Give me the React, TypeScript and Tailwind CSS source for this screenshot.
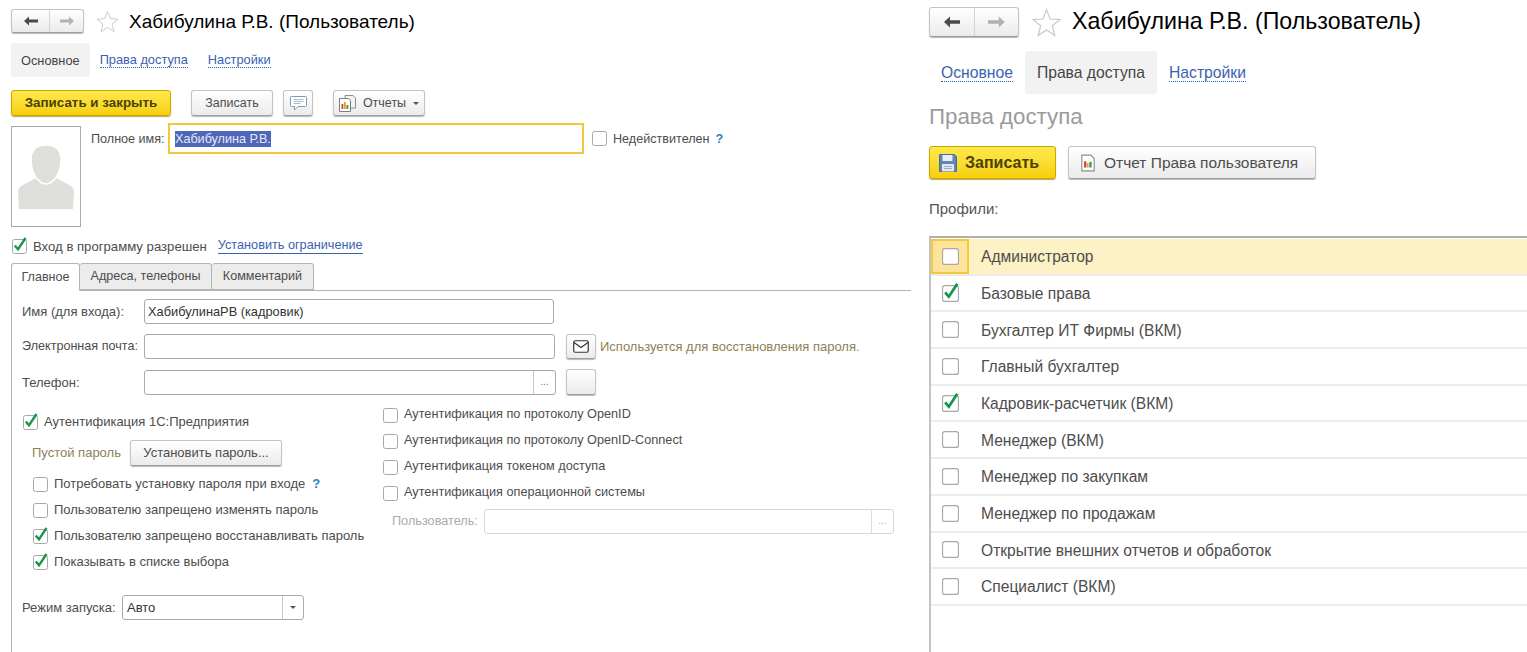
import type { ReactNode } from 'react'

const btnGrad = 'bg-gradient-to-b from-white to-[#ebebeb]'
const plainBtn = `${btnGrad} flex items-center justify-center rounded-[3px] border border-[#c4c4c4] border-b-[#9d9d9d] shadow-[0_1px_1px_#b8b8b8]`
const yellowBtn = 'flex items-center rounded-[3px] border border-[#c9a800] bg-gradient-to-b from-[#ffe94a] to-[#f7cf00] shadow-[0_1px_1px_#b8a860] font-bold text-[#4a4208]'

function Check({ checked, size = 15 }: { checked?: boolean; size?: number }) {
  return (
    <svg width={size} height={size} viewBox="0 0 15 15" className="shrink-0 overflow-visible">
      <rect x="0.5" y="0.5" width="14" height="14" rx="2" fill="#fff" stroke="#a8a8a8" />
      {checked && <path d="M2.8 6.5l3.2 3.8L13.5-1" fill="none" stroke="#14964b" strokeWidth="2.4" />}
    </svg>
  )
}

function NavButtons({ w, h, scale }: { w: number; h: number; scale: number }) {
  const half = 34 * scale
  return (
    <div className={`${plainBtn} shrink-0`} style={{ width: w, height: h }}>
      <div className="flex h-full items-center justify-center border-r border-[#d4d4d4]" style={{ width: half + 4 }}>
        <svg width={14 * scale} height={10 * scale} viewBox="0 0 14 10">
          <path d="M0 5l5-4.500V3.500h9v3H5v3z" fill="#4a4a4a" />
        </svg>
      </div>
      <div className="flex h-full flex-1 items-center justify-center">
        <svg width={14 * scale} height={10 * scale} viewBox="0 0 14 10">
          <path d="M14 5L9 .5V3.500H0v3h9v3z" fill="#b2b2b2" />
        </svg>
      </div>
    </div>
  )
}

function Star({ size }: { size: number }) {
  return (
    <svg width={size} height={size} viewBox="0 0 24 24" className="shrink-0">
      <path d="M12 1.500l3 7.600 8 .5-6.200 5.100 2 7.900L12 18.200l-6.800 4.400 2-7.900L1 9.600l8-.5z" fill="#fff" stroke="#c9c9c9" strokeWidth="1" />
    </svg>
  )
}

function ReportIcon({ size = 16 }: { size?: number }) {
  return (
    <svg width={size} height={size} viewBox="0 0 16 16" className="shrink-0">
      <path d="M2.500 1h8l3 3v11h-11z" fill="#fff" stroke="#8d8d8d" />
      <rect x="4.500" y="6.500" width="2" height="5.500" fill="#c8452f" />
      <rect x="7" y="8" width="1.500" height="4" fill="#e0a020" />
      <rect x="9.200" y="7" width="2" height="5" fill="#2f9a48" />
    </svg>
  )
}

function DocsIcon() {
  return (
    <svg width="17" height="17" viewBox="0 0 17 17" className="shrink-0">
      <path d="M6 .5h8l2.500 2.500v10H6z" fill="#f4f4f4" stroke="#8d8d8d" />
      <path d="M.5 3.500h9l2 2v11h-11z" fill="#fff" stroke="#7d7d7d" />
      <rect x="2.500" y="9" width="1.800" height="5" fill="#c8452f" />
      <rect x="5" y="7" width="1.800" height="7" fill="#e0a020" />
      <rect x="7.500" y="10" width="1.800" height="4" fill="#2f9a48" />
    </svg>
  )
}

function ChatIcon() {
  return (
    <svg width="17" height="15" viewBox="0 0 17 15">
      <path d="M1.500.5h14a1 1 0 0 1 1 1v8a1 1 0 0 1-1 1H8l-3.500 3.500V10.500h-3a1 1 0 0 1-1-1v-8a1 1 0 0 1 1-1z" fill="#fff" stroke="#7f9bb0" />
      <path d="M3.500 3.500h10M3.500 5.500h10M3.500 7.500h7" stroke="#a9bccb" />
    </svg>
  )
}

function SaveIcon() {
  return (
    <svg width="18" height="18" viewBox="0 0 18 18" className="shrink-0">
      <path d="M.5.5h15l2 2v15H.5z" fill="#5f86b5" stroke="#4a6c96" />
      <rect x="3.500" y="1" width="10" height="6" fill="#e8eef4" />
      <rect x="3" y="10" width="12" height="7.500" fill="#dfe6ee" />
      <path d="M5 12.500h8M5 14.500h8" stroke="#9fb0c2" />
    </svg>
  )
}

function Person() {
  return (
    <svg width="56" height="65" viewBox="0 0 56 65">
      <path d="M1 64L0 47q0-4 4-6.500L18 33q10 9 20 0l14 7.500q4 2.500 4 6.500l-1 17z" fill="#dededa" />
      <path d="M28 0c10 0 15 6 15 15 0 12-7 24-15 24S13 27 13 15C13 6 18 0 28 0z" fill="#dededa" stroke="#fff" strokeWidth="1.500" />
    </svg>
  )
}

function TabLink({ children, active, big }: { children: ReactNode; active?: boolean; big?: boolean }) {
  if (active) {
    return (
      <div className={big ? 'flex h-[43px] items-center rounded-[3px] bg-[#f2f2f2] px-[12px] pt-[1px] text-[#444]' : 'flex h-[34px] items-center rounded-[2px] bg-[#f2f2f2] px-[10px] pt-[1px] text-[#444]'}>
        {children}
      </div>
    )
  }
  return (
    <div className={big ? 'flex h-[43px] items-center px-[12px] pt-[1px]' : 'flex h-[34px] items-center px-[10px] pt-[1px]'}>
      <span className="border-b border-dotted border-[#2f5fb5] leading-[1.1] text-[#3a62b0]">{children}</span>
    </div>
  )
}

function CheckRow({ checked, children, cls }: { checked?: boolean; children: ReactNode; cls?: string }) {
  return (
    <div className={`flex h-[26px] items-center gap-[6px] ${cls ?? ''}`}>
      <Check checked={checked} />
      <span className="whitespace-nowrap">{children}</span>
    </div>
  )
}

function Field({ children, cls, dim }: { children?: ReactNode; cls: string; dim?: boolean }) {
  return (
    <div className={`flex h-[25px] items-center rounded-[3px] border bg-white ${dim ? 'border-[#d8d8d8]' : 'border-[#a9a9a9]'} ${cls}`}>
      {children}
    </div>
  )
}

function LeftPanel() {
  return (
    <div className="w-[929px] shrink-0 pl-[11px] text-[12px] text-[#4d4d4d]">
      <div className="box-content flex h-[26px] items-center pt-[8px]">
        <NavButtons w={73} h={24} scale={1} />
        <div className="ml-[12px]"><Star size={23} /></div>
        <div className="ml-[10px] whitespace-nowrap text-[19px] leading-none text-black">Хабибулина Р.В. (Пользователь)</div>
      </div>
      <div className="mt-[9px] flex text-[12.8px]">
        <TabLink active>Основное</TabLink>
        <TabLink>Права доступа</TabLink>
        <TabLink>Настройки</TabLink>
      </div>
      <div className="mt-[13px] flex h-[26px] items-stretch">
        <div className={`${yellowBtn} w-[160px] justify-center text-[13.4px]`}>Записать и закрыть</div>
        <div className={`${plainBtn} ml-[20px] w-[82px] text-[12.5px]`}>Записать</div>
        <div className={`${plainBtn} ml-[10px] w-[30px]`}><ChatIcon /></div>
        <div className={`${plainBtn} ml-[20px] w-[92px] gap-[7px] text-[12.5px]`}>
          <DocsIcon />
          <span>Отчеты</span>
          <span className="h-0 w-0 border-x-[3px] border-t-[3px] border-x-transparent border-t-[#555]" />
        </div>
      </div>
      <div className="mt-[7px] flex">
        <div className="mt-[3px] flex h-[101px] w-[70px] shrink-0 items-end justify-center border border-[#a9a9a9] pb-[16px]">
          <Person />
        </div>
        <div className="ml-[10px] flex h-[31px] items-center self-start text-[12.6px]">
          <span className="mt-[1px] w-[77px] whitespace-nowrap">Полное имя:</span>
          <div className="flex h-[31px] w-[416px] items-center border-2 border-[#f0c93a] pl-[5px]">
            <span className="bg-[#4f67b9] leading-[16px] text-[#e6e9f5]">Хабибулина Р.В.</span>
          </div>
          <div className="mt-[1px] ml-[8px] flex items-center gap-[6px]">
            <Check />
            <span>Недействителен</span>
            <span className="font-bold text-[#2a7fc0]">?</span>
          </div>
        </div>
      </div>
      <div className="mt-[11px] flex h-[17px] items-center pl-[1px] text-[13.15px]">
        <Check checked />
        <span className="ml-[6px]">Вход в программу разрешен</span>
        <span className="ml-[11px] border-b border-[#3a62b0] text-[12.7px] leading-[1.1] text-[#3a62b0]">Установить ограничение</span>
      </div>
      <div className="mt-[8px] flex h-[28px] w-[900px] items-end border-b border-[#b4b4b4] text-[12.6px]">
        <div className="relative top-[1px] flex h-[28px] w-[69px] items-center justify-center rounded-t-[3px] border border-b-0 border-[#b4b4b4] bg-white">Главное</div>
        <div className="flex h-[27px] w-[132px] items-center justify-center rounded-t-[3px] border border-l-0 border-[#b4b4b4] bg-[#ececec]">Адреса, телефоны</div>
        <div className="flex h-[27px] w-[102px] items-center justify-center rounded-t-[3px] border border-l-0 border-[#b4b4b4] bg-[#ececec]">Комментарий</div>
      </div>
      <div className="h-[400px] border-l border-[#b4b4b4] pl-[10px] text-[13px]">
        <div className="flex pt-[8px]">
          <span className="w-[122px] self-center">Имя (для входа):</span>
          <Field cls="w-[410px] pl-[3px] text-[12.8px] text-[#333]">ХабибулинаРВ (кадровик)</Field>
        </div>
        <div className="mt-[10px] flex items-center">
          <span className="w-[122px] text-[12.6px]">Электронная почта:</span>
          <Field cls="w-[411px]" />
          <div className={`${plainBtn} ml-[11px] h-[25px] w-[30px]`}>
            <svg width="16" height="13" viewBox="0 0 16 13">
              <rect x="0.750" y="0.750" width="14.500" height="11.500" rx="1.500" fill="#fff" stroke="#333" strokeWidth="1.200" />
              <path d="M1 2.500l7 5 7-5" fill="none" stroke="#333" strokeWidth="1.200" />
            </svg>
          </div>
          <span className="ml-[4px] whitespace-nowrap text-[#8f7f55]">Используется для восстановления пароля.</span>
        </div>
        <div className="mt-[10px] flex items-center">
          <span className="w-[122px] pt-[1px]">Телефон:</span>
          <Field cls="w-[412px] justify-end">
            <div className="flex h-full w-[22px] items-center justify-center border-l border-[#c8c8c8] pb-[2px] text-[10px] text-[#777]">...</div>
          </Field>
          <div className={`${plainBtn} ml-[10px] h-[26px] w-[30px]`} />
        </div>
        <div className="mt-[7px] flex">
          <div className="w-[361px] shrink-0">
            <CheckRow checked cls="mt-[7px] ml-[1px]">Аутентификация 1С:Предприятия</CheckRow>
            <div className="mt-[5px] flex items-center">
              <span className="ml-[10px] w-[98px] text-[#8f7f55]">Пустой пароль</span>
              <div className={`${plainBtn} h-[26px] w-[152px]`}>Установить пароль...</div>
            </div>
            <div className="mt-[5px] pl-[11px]">
              <CheckRow>
                Потребовать установку пароля при входе<span className="ml-[7px] font-bold text-[#2a7fc0]">?</span>
              </CheckRow>
              <CheckRow>Пользователю запрещено изменять пароль</CheckRow>
              <CheckRow checked>Пользователю запрещено восстанавливать пароль</CheckRow>
              <CheckRow checked>Показывать в списке выбора</CheckRow>
            </div>
            <div className="mt-[20px] flex items-center">
              <span className="w-[100px]">Режим запуска:</span>
              <div className="flex h-[25px] w-[182px] items-center rounded-[3px] border border-[#a9a9a9] pl-[4px] text-[#333]">
                <span className="flex-1">Авто</span>
                <div className="flex h-full w-[21px] items-center justify-center border-l border-[#c8c8c8]">
                  <span className="h-0 w-0 border-x-[3px] border-t-[3px] border-x-transparent border-t-[#555]" />
                </div>
              </div>
            </div>
          </div>
          <div className="text-[12.7px]">
            <CheckRow>Аутентификация по протоколу OpenID</CheckRow>
            <CheckRow>Аутентификация по протоколу OpenID-Connect</CheckRow>
            <CheckRow>Аутентификация токеном доступа</CheckRow>
            <CheckRow>Аутентификация операционной системы</CheckRow>
            <div className="mt-[3px] flex items-center pl-[9px] text-[#ababab]">
              <span className="w-[92px]">Пользователь:</span>
              <Field dim cls="w-[410px] justify-end">
                <div className="flex h-full w-[22px] items-center justify-center border-l border-[#dedede] pb-[2px] text-[10px] text-[#aaa]">...</div>
              </Field>
            </div>
          </div>
        </div>
      </div>
    </div>
  )
}

const profiles = [
  { name: 'Администратор', active: true },
  { name: 'Базовые права', checked: true },
  { name: 'Бухгалтер ИТ Фирмы (ВКМ)' },
  { name: 'Главный бухгалтер' },
  { name: 'Кадровик-расчетчик (ВКМ)', checked: true },
  { name: 'Менеджер (ВКМ)' },
  { name: 'Менеджер по закупкам' },
  { name: 'Менеджер по продажам' },
  { name: 'Открытие внешних отчетов и обработок' },
  { name: 'Специалист (ВКМ)' },
]

function RightPanel() {
  return (
    <div className="min-w-0 flex-1 text-[15px] text-[#4d4d4d]">
      <div className="box-content flex h-[30px] items-center pt-[7px]">
        <NavButtons w={90} h={30} scale={1.2} />
        <div className="ml-[13px]"><Star size={29} /></div>
        <div className="ml-[11px] whitespace-nowrap text-[23.2px] leading-none text-black">Хабибулина Р.В. (Пользователь)</div>
      </div>
      <div className="mt-[14px] flex text-[15.7px]">
        <TabLink big>Основное</TabLink>
        <TabLink big active>Права доступа</TabLink>
        <TabLink big>Настройки</TabLink>
      </div>
      <div className="mt-[9px] text-[22.3px] leading-[28px] text-[#9b9b9b]">Права доступа</div>
      <div className="mt-[15px] flex h-[33px] items-stretch">
        <div className={`${yellowBtn} w-[127px] gap-[8px] pl-[9px] text-[16px]`}>
          <SaveIcon />
          <span>Записать</span>
        </div>
        <div className={`${plainBtn} ml-[12px] w-[248px] justify-start gap-[7px] pl-[10px] text-[15.5px]`}>
          <ReportIcon size={18} />
          <span>Отчет Права пользователя</span>
        </div>
      </div>
      <div className="mt-[21px] leading-[18px] text-[#555]">Профили:</div>
      <div className="mt-[18px] h-[420px] border-t-2 border-l-2 border-[#b0b0b0] border-l-[#c4c4c4] text-[15.6px]">
        <div className="pt-[1px]">
          {profiles.map((p) => (
            <div key={p.name} className={`flex h-[36.7px] items-center border-b-2 border-[#ececec] ${p.active ? 'bg-[#fdf1c6]' : ''}`}>
              <div className={`flex h-full w-[38px] shrink-0 items-center justify-center ${p.active ? 'border-2 border-[#f5c93c] bg-[#fde49c]' : ''}`}>
                <Check checked={p.checked} size={17} />
              </div>
              <span className="ml-[12px] pt-[1px]">{p.name}</span>
            </div>
          ))}
        </div>
      </div>
    </div>
  )
}

export default function App() {
  return (
    <div className="flex h-[652px] w-[1527px] overflow-hidden bg-white font-['Liberation_Sans',Arial,sans-serif]">
      <LeftPanel />
      <RightPanel />
    </div>
  )
}
